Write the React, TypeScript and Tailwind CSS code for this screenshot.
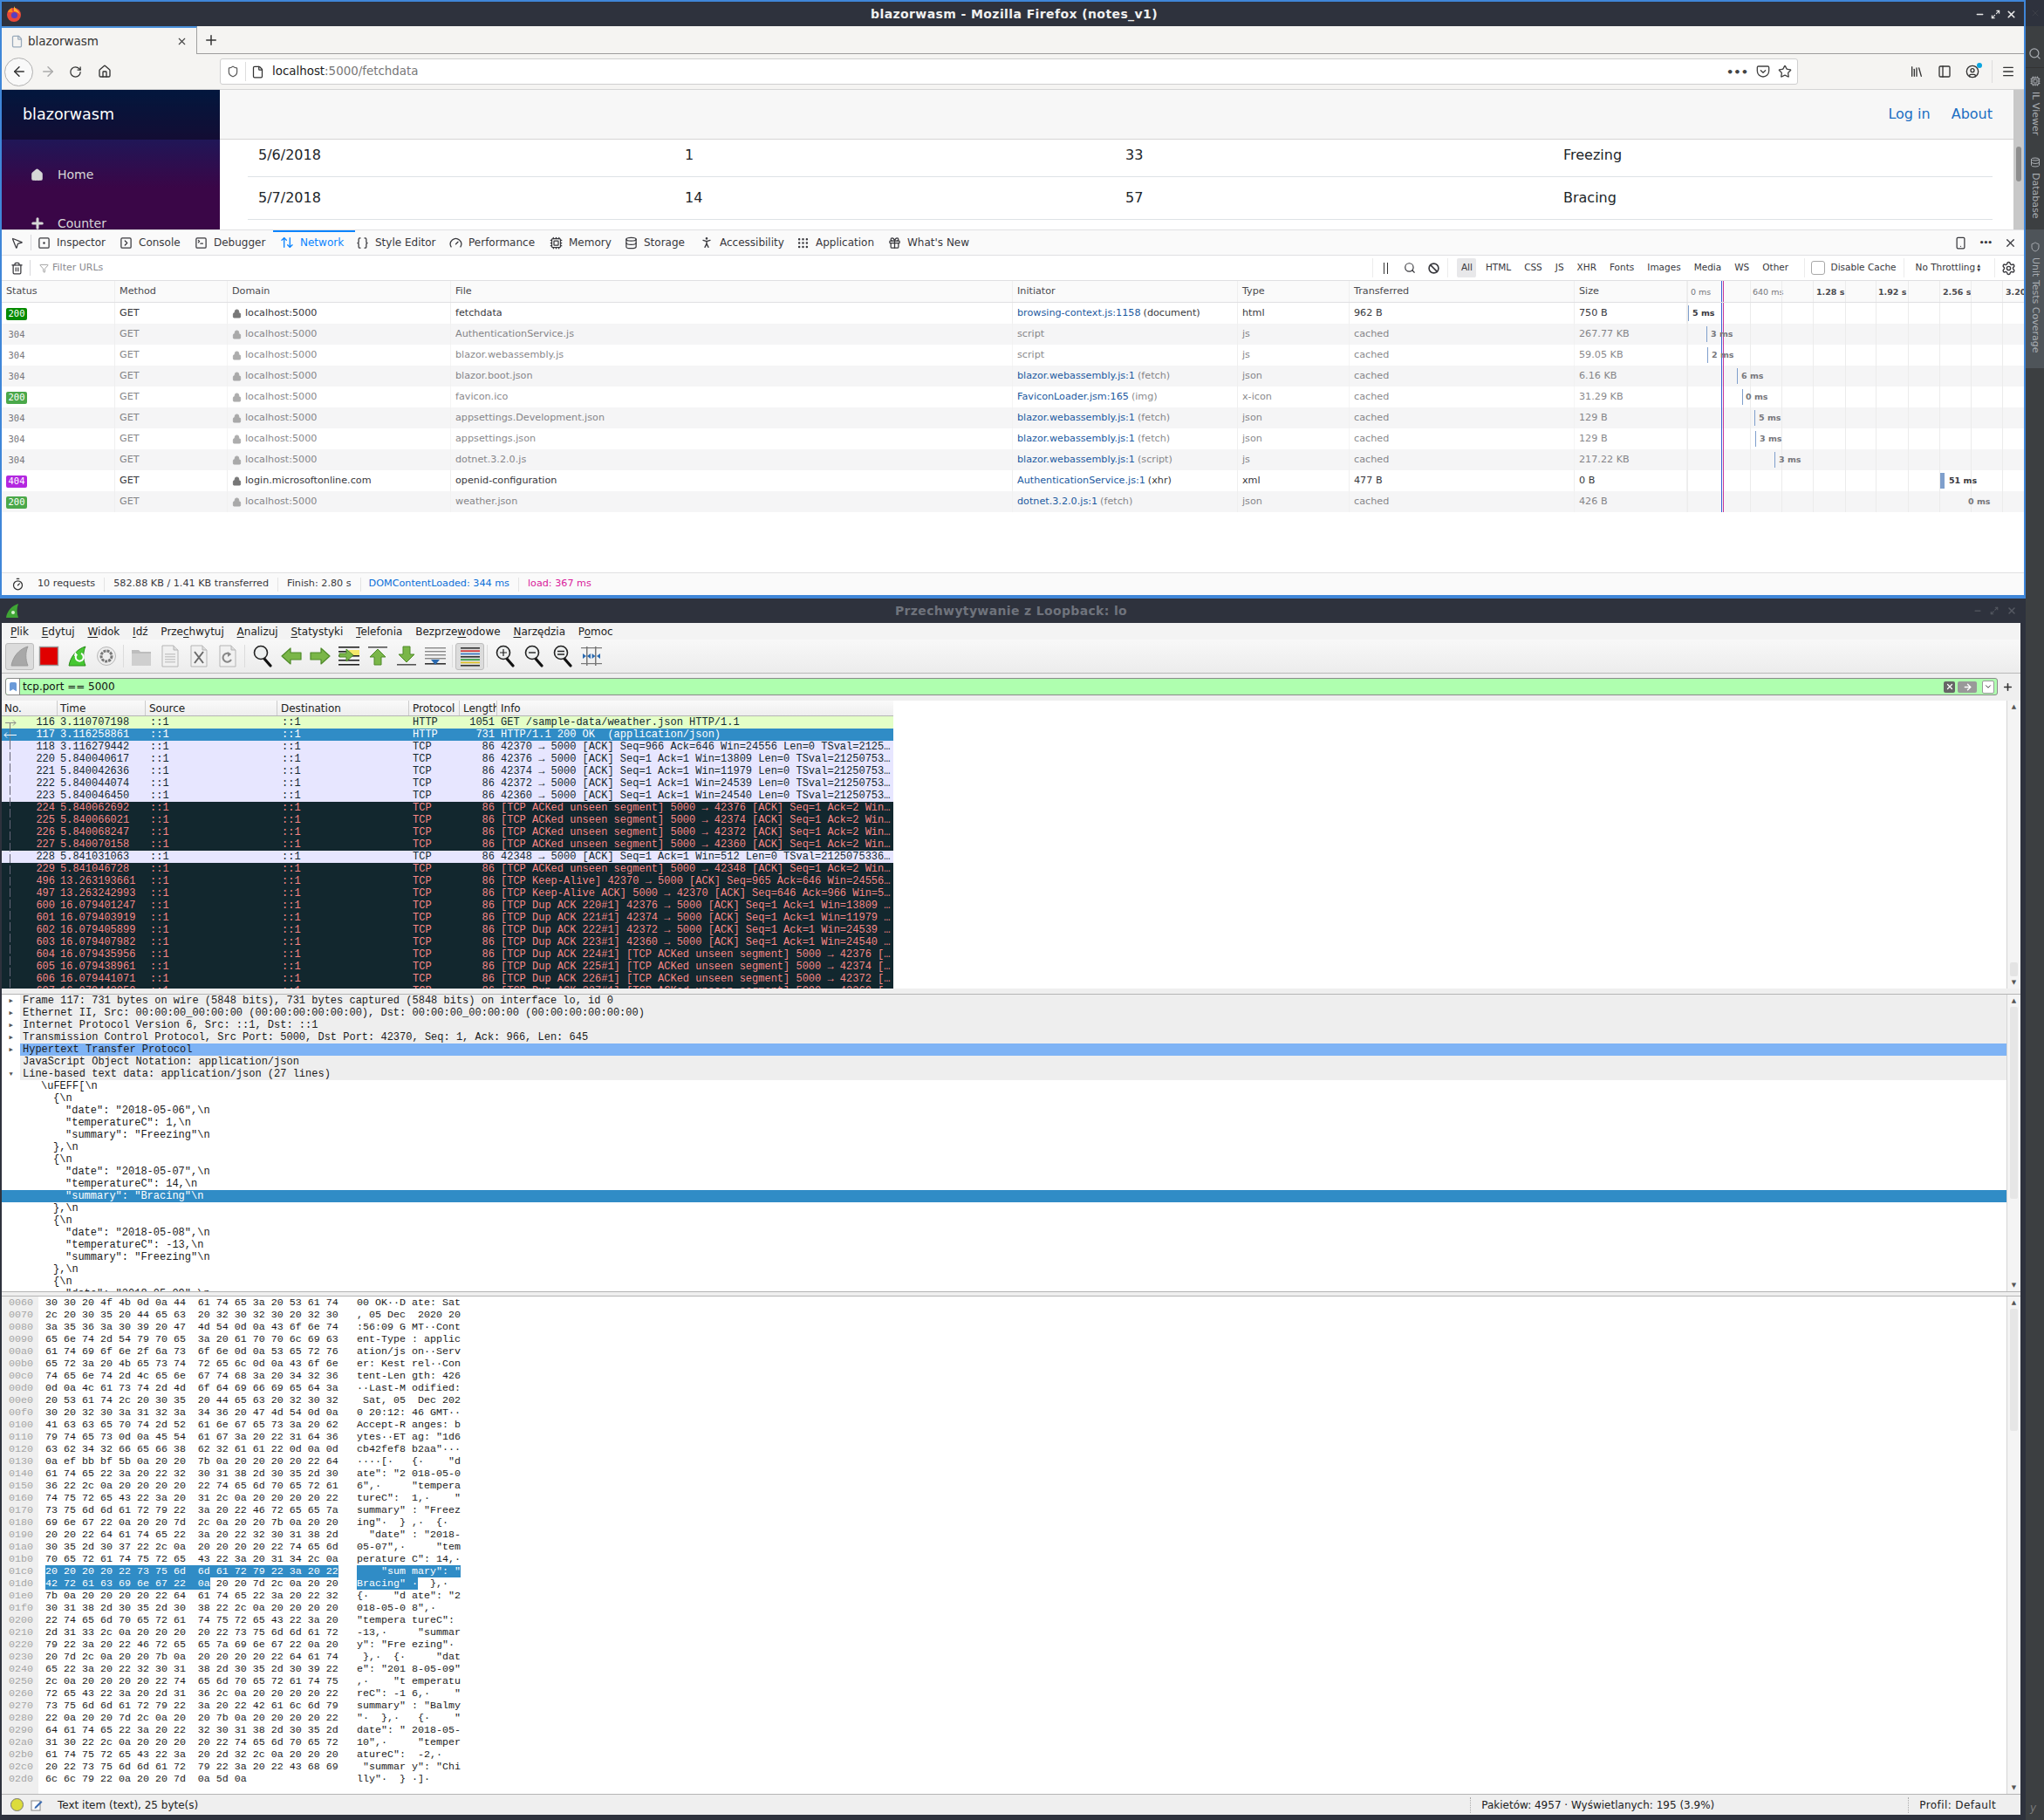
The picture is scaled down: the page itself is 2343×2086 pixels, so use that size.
import type { ReactNode } from "react";
import {
  ArrowLeft, ArrowRight, RotateCw, Home, File, Star, Library, PanelLeft, CircleUser, Menu, X, Plus,
  MousePointer2, SquareDot, SquareTerminal, ArrowUpDown, Braces, Gauge, Cpu, Database, PersonStanding,
  Grip, Gift, Trash2, Filter, Search, Ban, Settings, Timer, Lock, Smartphone, Shield, Pocket,
  Minus, Maximize2, SquareChevronRight, Bookmark, ChevronDown, ArrowRight as GoArrow,
} from "lucide-react";

const dj = "[font-family:'DejaVu_Sans',sans-serif]";

type Net = { st: string; dom?: string; file: string; init: string; via: string; type: string; tr: string; size: string; tick: number; label: number; ms: string; on?: boolean };

const NET: Net[] = [
  { st: "200", file: "fetchdata", init: "browsing-context.js:1158", via: "(document)", type: "html", tr: "962 B", size: "750 B", tick: 1, label: 6, ms: "5 ms", on: true },
  { st: "304", file: "AuthenticationService.js", init: "", via: "script", type: "js", tr: "cached", size: "267.77 KB", tick: 22, label: 27, ms: "3 ms" },
  { st: "304", file: "blazor.webassembly.js", init: "", via: "script", type: "js", tr: "cached", size: "59.05 KB", tick: 23, label: 28, ms: "2 ms" },
  { st: "304", file: "blazor.boot.json", init: "blazor.webassembly.js:1", via: "(fetch)", type: "json", tr: "cached", size: "6.16 KB", tick: 57, label: 62, ms: "6 ms" },
  { st: "200", file: "favicon.ico", init: "FaviconLoader.jsm:165", via: "(img)", type: "x-icon", tr: "cached", size: "31.29 KB", tick: 63, label: 67, ms: "0 ms" },
  { st: "304", file: "appsettings.Development.json", init: "blazor.webassembly.js:1", via: "(fetch)", type: "json", tr: "cached", size: "129 B", tick: 77, label: 82, ms: "5 ms" },
  { st: "304", file: "appsettings.json", init: "blazor.webassembly.js:1", via: "(fetch)", type: "json", tr: "cached", size: "129 B", tick: 78, label: 83, ms: "3 ms" },
  { st: "304", file: "dotnet.3.2.0.js", init: "blazor.webassembly.js:1", via: "(script)", type: "js", tr: "cached", size: "217.22 KB", tick: 100, label: 105, ms: "3 ms" },
  { st: "404", dom: "login.microsoftonline.com", file: "openid-configuration", init: "AuthenticationService.js:1", via: "(xhr)", type: "xml", tr: "477 B", size: "0 B", tick: 290, label: 300, ms: "51 ms", on: true },
  { st: "200", file: "weather.json", init: "dotnet.3.2.0.js:1", via: "(fetch)", type: "json", tr: "cached", size: "426 B", tick: -1, label: 322, ms: "0 ms" },
];

const GRID = [0, 72, 108, 144, 181, 216, 253, 289, 325, 361];
const TICKS = [
  { x: 4, t: "0 ms", b: false },
  { x: 75, t: "640 ms", b: false },
  { x: 148, t: "1.28 s", b: true },
  { x: 219, t: "1.92 s", b: true },
  { x: 293, t: "2.56 s", b: true },
  { x: 365, t: "3.20", b: true },
];

const DEV_TABS = [
  { t: "Inspector", w: "w-[94px]", i: <SquareDot size={15} /> },
  { t: "Console", w: "w-[86px]", i: <SquareChevronRight size={15} /> },
  { t: "Debugger", w: "w-[98px]", i: <SquareTerminal size={15} /> },
  { t: "Network", w: "w-[87px]", i: <ArrowUpDown size={16} />, on: true },
  { t: "Style Editor", w: "w-[107px]", i: <Braces size={15} /> },
  { t: "Performance", w: "w-[115px]", i: <Gauge size={15} /> },
  { t: "Memory", w: "w-[86px]", i: <Cpu size={15} /> },
  { t: "Storage", w: "w-[86px]", i: <Database size={15} /> },
  { t: "Accessibility", w: "w-[111px]", i: <PersonStanding size={16} /> },
  { t: "Application", w: "w-[105px]", i: <Grip size={15} /> },
  { t: "What's New", w: "w-[100px]", i: <Gift size={15} /> },
];

const CHIPS = ["All", "HTML", "CSS", "JS", "XHR", "Fonts", "Images", "Media", "WS", "Other"];

type Pk = [string, string, string, string, string, "http" | "sel" | "tcp" | "bad"];
const PACKETS: Pk[] = [
  ["116", "3.110707198", "HTTP", "1051", "GET /sample-data/weather.json HTTP/1.1", "http"],
  ["117", "3.116258861", "HTTP", "731", "HTTP/1.1 200 OK  (application/json)", "sel"],
  ["118", "3.116279442", "TCP", "86", "42370 → 5000 [ACK] Seq=966 Ack=646 Win=24556 Len=0 TSval=2125…", "tcp"],
  ["220", "5.840040617", "TCP", "86", "42376 → 5000 [ACK] Seq=1 Ack=1 Win=13809 Len=0 TSval=21250753…", "tcp"],
  ["221", "5.840042636", "TCP", "86", "42374 → 5000 [ACK] Seq=1 Ack=1 Win=11979 Len=0 TSval=21250753…", "tcp"],
  ["222", "5.840044074", "TCP", "86", "42372 → 5000 [ACK] Seq=1 Ack=1 Win=24539 Len=0 TSval=21250753…", "tcp"],
  ["223", "5.840046450", "TCP", "86", "42360 → 5000 [ACK] Seq=1 Ack=1 Win=24540 Len=0 TSval=21250753…", "tcp"],
  ["224", "5.840062692", "TCP", "86", "[TCP ACKed unseen segment] 5000 → 42376 [ACK] Seq=1 Ack=2 Win…", "bad"],
  ["225", "5.840066021", "TCP", "86", "[TCP ACKed unseen segment] 5000 → 42374 [ACK] Seq=1 Ack=2 Win…", "bad"],
  ["226", "5.840068247", "TCP", "86", "[TCP ACKed unseen segment] 5000 → 42372 [ACK] Seq=1 Ack=2 Win…", "bad"],
  ["227", "5.840070158", "TCP", "86", "[TCP ACKed unseen segment] 5000 → 42360 [ACK] Seq=1 Ack=2 Win…", "bad"],
  ["228", "5.841031063", "TCP", "86", "42348 → 5000 [ACK] Seq=1 Ack=1 Win=512 Len=0 TSval=2125075336…", "tcp"],
  ["229", "5.841046728", "TCP", "86", "[TCP ACKed unseen segment] 5000 → 42348 [ACK] Seq=1 Ack=2 Win…", "bad"],
  ["496", "13.263193661", "TCP", "86", "[TCP Keep-Alive] 42370 → 5000 [ACK] Seq=965 Ack=646 Win=24556…", "bad"],
  ["497", "13.263242993", "TCP", "86", "[TCP Keep-Alive ACK] 5000 → 42370 [ACK] Seq=646 Ack=966 Win=5…", "bad"],
  ["600", "16.079401247", "TCP", "86", "[TCP Dup ACK 220#1] 42376 → 5000 [ACK] Seq=1 Ack=1 Win=13809 …", "bad"],
  ["601", "16.079403919", "TCP", "86", "[TCP Dup ACK 221#1] 42374 → 5000 [ACK] Seq=1 Ack=1 Win=11979 …", "bad"],
  ["602", "16.079405899", "TCP", "86", "[TCP Dup ACK 222#1] 42372 → 5000 [ACK] Seq=1 Ack=1 Win=24539 …", "bad"],
  ["603", "16.079407982", "TCP", "86", "[TCP Dup ACK 223#1] 42360 → 5000 [ACK] Seq=1 Ack=1 Win=24540 …", "bad"],
  ["604", "16.079435956", "TCP", "86", "[TCP Dup ACK 224#1] [TCP ACKed unseen segment] 5000 → 42376 […", "bad"],
  ["605", "16.079438961", "TCP", "86", "[TCP Dup ACK 225#1] [TCP ACKed unseen segment] 5000 → 42374 […", "bad"],
  ["606", "16.079441071", "TCP", "86", "[TCP Dup ACK 226#1] [TCP ACKed unseen segment] 5000 → 42372 […", "bad"],
  ["607", "16.079443050", "TCP", "86", "[TCP Dup ACK 227#1] [TCP ACKed unseen segment] 5000 → 42360 […", "bad"],
];

const ROW_CLS = {
  http: "bg-[#e4ffc7] text-[#12272e]",
  sel: "bg-[#308cc6] text-white",
  tcp: "bg-[#e7e6ff] text-[#12272e]",
  bad: "bg-[#12272e] text-[#f78787]",
};

const JSON_LINES: [number, string][] = [
  [47, "\\uFEFF[\\n"],
  [61, "{\\n"],
  [75, '"date": "2018-05-06",\\n'],
  [75, '"temperatureC": 1,\\n'],
  [75, '"summary": "Freezing"\\n'],
  [61, "},\\n"],
  [61, "{\\n"],
  [75, '"date": "2018-05-07",\\n'],
  [75, '"temperatureC": 14,\\n'],
  [75, '"summary": "Bracing"\\n'],
  [61, "},\\n"],
  [61, "{\\n"],
  [75, '"date": "2018-05-08",\\n'],
  [75, '"temperatureC": -13,\\n'],
  [75, '"summary": "Freezing"\\n'],
  [61, "},\\n"],
  [61, "{\\n"],
  [75, '"date": "2018-05-09",\\n'],
];

const TREE = [
  { t: "Frame 117: 731 bytes on wire (5848 bits), 731 bytes captured (5848 bits) on interface lo, id 0", m: "r" },
  { t: "Ethernet II, Src: 00:00:00_00:00:00 (00:00:00:00:00:00), Dst: 00:00:00_00:00:00 (00:00:00:00:00:00)", m: "r" },
  { t: "Internet Protocol Version 6, Src: ::1, Dst: ::1", m: "r" },
  { t: "Transmission Control Protocol, Src Port: 5000, Dst Port: 42370, Seq: 1, Ack: 966, Len: 645", m: "r" },
  { t: "Hypertext Transfer Protocol", m: "r", hi: true },
  { t: "JavaScript Object Notation: application/json", m: "" },
  { t: "Line-based text data: application/json (27 lines)", m: "d" },
];

const HEX: [string, string][] = [
  ["0060", "30 30 20 4f 4b 0d 0a 44 61 74 65 3a 20 53 61 74"],
  ["0070", "2c 20 30 35 20 44 65 63 20 32 30 32 30 20 32 30"],
  ["0080", "3a 35 36 3a 30 39 20 47 4d 54 0d 0a 43 6f 6e 74"],
  ["0090", "65 6e 74 2d 54 79 70 65 3a 20 61 70 70 6c 69 63"],
  ["00a0", "61 74 69 6f 6e 2f 6a 73 6f 6e 0d 0a 53 65 72 76"],
  ["00b0", "65 72 3a 20 4b 65 73 74 72 65 6c 0d 0a 43 6f 6e"],
  ["00c0", "74 65 6e 74 2d 4c 65 6e 67 74 68 3a 20 34 32 36"],
  ["00d0", "0d 0a 4c 61 73 74 2d 4d 6f 64 69 66 69 65 64 3a"],
  ["00e0", "20 53 61 74 2c 20 30 35 20 44 65 63 20 32 30 32"],
  ["00f0", "30 20 32 30 3a 31 32 3a 34 36 20 47 4d 54 0d 0a"],
  ["0100", "41 63 63 65 70 74 2d 52 61 6e 67 65 73 3a 20 62"],
  ["0110", "79 74 65 73 0d 0a 45 54 61 67 3a 20 22 31 64 36"],
  ["0120", "63 62 34 32 66 65 66 38 62 32 61 61 22 0d 0a 0d"],
  ["0130", "0a ef bb bf 5b 0a 20 20 7b 0a 20 20 20 20 22 64"],
  ["0140", "61 74 65 22 3a 20 22 32 30 31 38 2d 30 35 2d 30"],
  ["0150", "36 22 2c 0a 20 20 20 20 22 74 65 6d 70 65 72 61"],
  ["0160", "74 75 72 65 43 22 3a 20 31 2c 0a 20 20 20 20 22"],
  ["0170", "73 75 6d 6d 61 72 79 22 3a 20 22 46 72 65 65 7a"],
  ["0180", "69 6e 67 22 0a 20 20 7d 2c 0a 20 20 7b 0a 20 20"],
  ["0190", "20 20 22 64 61 74 65 22 3a 20 22 32 30 31 38 2d"],
  ["01a0", "30 35 2d 30 37 22 2c 0a 20 20 20 20 22 74 65 6d"],
  ["01b0", "70 65 72 61 74 75 72 65 43 22 3a 20 31 34 2c 0a"],
  ["01c0", "20 20 20 20 22 73 75 6d 6d 61 72 79 22 3a 20 22"],
  ["01d0", "42 72 61 63 69 6e 67 22 0a 20 20 7d 2c 0a 20 20"],
  ["01e0", "7b 0a 20 20 20 20 22 64 61 74 65 22 3a 20 22 32"],
  ["01f0", "30 31 38 2d 30 35 2d 30 38 22 2c 0a 20 20 20 20"],
  ["0200", "22 74 65 6d 70 65 72 61 74 75 72 65 43 22 3a 20"],
  ["0210", "2d 31 33 2c 0a 20 20 20 20 22 73 75 6d 6d 61 72"],
  ["0220", "79 22 3a 20 22 46 72 65 65 7a 69 6e 67 22 0a 20"],
  ["0230", "20 7d 2c 0a 20 20 7b 0a 20 20 20 20 22 64 61 74"],
  ["0240", "65 22 3a 20 22 32 30 31 38 2d 30 35 2d 30 39 22"],
  ["0250", "2c 0a 20 20 20 20 22 74 65 6d 70 65 72 61 74 75"],
  ["0260", "72 65 43 22 3a 20 2d 31 36 2c 0a 20 20 20 20 22"],
  ["0270", "73 75 6d 6d 61 72 79 22 3a 20 22 42 61 6c 6d 79"],
  ["0280", "22 0a 20 20 7d 2c 0a 20 20 7b 0a 20 20 20 20 22"],
  ["0290", "64 61 74 65 22 3a 20 22 32 30 31 38 2d 30 35 2d"],
  ["02a0", "31 30 22 2c 0a 20 20 20 20 22 74 65 6d 70 65 72"],
  ["02b0", "61 74 75 72 65 43 22 3a 20 2d 32 2c 0a 20 20 20"],
  ["02c0", "20 22 73 75 6d 6d 61 72 79 22 3a 20 22 43 68 69"],
  ["02d0", "6c 6c 79 22 0a 20 20 7d 0a 5d 0a"],
];

const MENU: [string, string, string][] = [
  ["", "P", "lik"], ["", "E", "dytuj"], ["", "W", "idok"], ["", "I", "dź"], ["Prze", "c", "hwytuj"], ["", "A", "nalizuj"],
  ["", "S", "tatystyki"], ["", "T", "elefonia"], ["Bezprze", "w", "odowe"], ["", "N", "arzędzia"], ["P", "o", "moc"],
];

function ascii(bytes: string[]) {
  return bytes.map((b) => {
    const c = parseInt(b, 16);
    return c >= 32 && c < 127 ? String.fromCharCode(c) : "·";
  }).join("");
}

function HexLine({ off, hex }: { off: string; hex: string }) {
  const b = hex.split(" ");
  const h = b.slice(0, 8).join(" ") + "  " + b.slice(8).join(" ");
  const a = ascii(b.slice(0, 8)) + " " + ascii(b.slice(8));
  let hexEl: ReactNode = h;
  let ascEl: ReactNode = a;
  const sel = "bg-[#308cc6] text-white";
  if (off === "01c0") {
    hexEl = <span className={sel}>{h}</span>;
    ascEl = <span className={sel}>{a}</span>;
  }
  if (off === "01d0") {
    hexEl = <><span className={sel}>{h.slice(0, 27)}</span>{h.slice(27)}</>;
    ascEl = <><span className={sel}>{a.slice(0, 10)}</span>{a.slice(10)}</>;
  }
  return (
    <div className="flex h-[14px] whitespace-pre text-[#1a1a1a]">
      <span className="w-[336px]">{hexEl}</span>
      <span className="ml-[21px]">{ascEl}</span>
    </div>
  );
}

function FirefoxLogo() {
  return (
    <svg width="18" height="20" viewBox="0 0 18 20">
      <circle cx="9" cy="11" r="8" fill="#e8493a" />
      <path d="M9 1c1 3 6 5 7 10-2-3-5-4-7-4z" fill="#ffb02e" />
      <path d="M2 8c1-3 3-4 5-5-1 3 0 4 1 5z" fill="#ff8a1e" />
      <circle cx="9.5" cy="11.5" r="3.6" fill="#5a3fc0" />
    </svg>
  );
}

function Fin({ fill, stroke }: { fill: string; stroke: string }) {
  return (
    <svg width="24" height="24" viewBox="0 0 24 24">
      <path d="M2 23C4 12 11 4 21 1c-3 6-3 15 0 22z" fill={fill} stroke={stroke} strokeWidth="1" />
    </svg>
  );
}

function Doc({ children }: { children?: ReactNode }) {
  return (
    <svg width="24" height="26" viewBox="0 0 24 26">
      <path d="M3 1h13l5 5v19H3z" fill="#f1f1f1" stroke="#b5b5b5" />
      <path d="M16 1v5h5" fill="#ddd" stroke="#b5b5b5" />
      {children}
    </svg>
  );
}

function Lens({ inner }: { inner?: ReactNode }) {
  return (
    <svg width="22" height="26" viewBox="0 0 22 26">
      <path d="M13 16l7 8" stroke="#111" strokeWidth="3.2" strokeLinecap="round" />
      <circle cx="9" cy="9" r="7.5" fill="#eef0f0" stroke="#222" strokeWidth="1.6" />
      {inner}
    </svg>
  );
}

function GreenArrow({ d }: { d: string }) {
  return (
    <svg width="24" height="24" viewBox="0 0 24 24">
      <path d={d} fill="#7ab648" stroke="#4e8a28" strokeWidth="1.2" strokeLinejoin="round" />
    </svg>
  );
}

function TextLines({ colors }: { colors?: string[] }) {
  const c = colors ?? ["#333", "#333", "#333", "#333"];
  return (
    <svg width="22" height="24" viewBox="0 0 22 24">
      {c.map((s, i) => <rect key={i} x="0" y={2 + i * (20 / (c.length - 1))} width="22" height="1.6" fill={s} />)}
    </svg>
  );
}

const TOOLS: { w: string; el: ReactNode; on?: boolean; sep?: boolean }[] = [
  { w: "w-[33px]", on: true, el: <Fin fill="#a8a8a8" stroke="#9a9a9a" /> },
  { w: "w-[33px]", el: <svg width="24" height="24" viewBox="0 0 24 24"><rect x="1.5" y="1.5" width="21" height="21" fill="#e00000" stroke="#999" strokeWidth="1.4" /></svg> },
  { w: "w-[33px]", el: <svg width="24" height="24" viewBox="0 0 24 24"><path d="M2 23C4 12 11 4 21 1c-3 6-3 15 0 22z" fill="#46c832" stroke="#2c8a1c" /><path d="M16 9a4.5 4.5 0 1 1-5 1" fill="none" stroke="#fff" strokeWidth="2" /><path d="M9 7l3 4-4 1z" fill="#fff" /></svg> },
  { w: "w-[33px]", el: <svg width="24" height="24" viewBox="0 0 24 24"><circle cx="12" cy="12" r="10.5" fill="#eee" stroke="#b8b8b8" /><circle cx="12" cy="12" r="6" fill="none" stroke="#777" strokeWidth="3" strokeDasharray="3 1" /><circle cx="12" cy="12" r="2.4" fill="#eee" /></svg>, sep: true },
  { w: "w-[33px]", el: <svg width="24" height="24" viewBox="0 0 24 24"><path d="M1 5h8l2 2h12v16H1z" fill="#bdbdbd" /><path d="M1 9h22v14H1z" fill="#cfcfcf" /></svg> },
  { w: "w-[33px]", el: <Doc><g fill="#c9c9c9"><rect x="6" y="10" width="12" height="1.5" /><rect x="6" y="13" width="12" height="1.5" /><rect x="6" y="16" width="12" height="1.5" /><rect x="6" y="19" width="12" height="1.5" /></g></Doc> },
  { w: "w-[33px]", el: <Doc><path d="M7 8l10 13M17 8L7 21" stroke="#6a6a6a" strokeWidth="2" /></Doc> },
  { w: "w-[33px]", el: <Doc><path d="M15 11a5 5 0 1 0 1 6" fill="none" stroke="#888" strokeWidth="2" /><path d="M12 8l4 3-4 3z" fill="#888" /></Doc>, sep: true },
  { w: "w-[33px]", el: <Lens /> },
  { w: "w-[33px]", el: <GreenArrow d="M1 12l10-9v5h12v8H11v5z" /> },
  { w: "w-[33px]", el: <GreenArrow d="M23 12l-10-9v5H1v8h12v5z" /> },
  { w: "w-[33px]", el: <svg width="24" height="24" viewBox="0 0 24 24"><g fill="#222"><rect y="1" width="24" height="1.6" /><rect y="6" width="24" height="1.6" /><rect y="11" width="24" height="1.6" /><rect y="16" width="24" height="1.6" /><rect y="21" width="24" height="1.6" /></g><rect x="12" y="5" width="12" height="6" fill="#f4e86a" /><path d="M1 9h8V4l8 7-8 7v-5H1z" fill="#7ab648" stroke="#4e8a28" /></svg> },
  { w: "w-[33px]", el: <svg width="24" height="24" viewBox="0 0 24 24"><rect x="1" y="1" width="22" height="1.6" fill="#555" /><path d="M12 4l9 9h-5v9H8v-9H3z" fill="#7ab648" stroke="#4e8a28" /></svg> },
  { w: "w-[33px]", el: <svg width="24" height="24" viewBox="0 0 24 24"><rect x="1" y="21" width="22" height="1.6" fill="#555" /><path d="M12 19l9-9h-5V1H8v9H3z" fill="#7ab648" stroke="#4e8a28" /></svg> },
  { w: "w-[33px]", el: <svg width="24" height="24" viewBox="0 0 24 24"><g fill="#888"><rect y="2" width="24" height="1.4" /><rect y="6" width="24" height="1.4" /><rect y="10" width="24" height="1.4" /><rect y="14" width="24" height="1.4" /></g><rect y="20" width="24" height="1.6" fill="#333" /><path d="M7 16h10l-5 6z" fill="#2a6ab0" /></svg>, sep: true },
  { w: "w-[33px]", on: true, el: <TextLines colors={["#333", "#d03030", "#3a7ac8", "#333", "#2a9a3a", "#e0c020", "#333"]} />, sep: true },
  { w: "w-[33px]", el: <Lens inner={<path d="M5 9h8M9 5v8" stroke="#222" strokeWidth="1.2" />} /> },
  { w: "w-[33px]", el: <Lens inner={<path d="M5 9h8" stroke="#222" strokeWidth="1.4" />} /> },
  { w: "w-[33px]", el: <Lens inner={<path d="M5 7.5h8M5 11h8" stroke="#222" strokeWidth="1.3" />} /> },
  { w: "w-[33px]", el: <svg width="24" height="24" viewBox="0 0 24 24"><g fill="#777"><rect x="6" y="1" width="1.5" height="22" /><rect x="16" y="1" width="1.5" height="22" /><rect y="2" width="24" height="1.2" /><rect y="20" width="24" height="1.2" /></g><path d="M2 9l4 3-4 3zM11 9l-4 3 4 3zM12.5 9l4 3-4 3zM22 9l-4 3 4 3z" fill="#2a6ab0" /></svg> },
];

function Scroll({ thumb }: { thumb: string }) {
  return (
    <div className="flex w-[16px] shrink-0 flex-col items-center border-l border-[#d4d4d4] bg-[#f4f4f4] text-[#555]">
      <span className="flex h-[14px] items-center text-[7px] leading-none">▲</span>
      <div className="flex min-h-0 w-full flex-1 flex-col px-[3px]">
        <div className={thumb} />
      </div>
      <span className="flex h-[14px] items-center text-[7px] leading-none">▼</span>
    </div>
  );
}

function Firefox() {
  return (
    <div className={`flex h-[686px] flex-col overflow-hidden border-x-2 border-t-2 border-b-4 border-[#3f86d8] bg-white ${dj}`}>
      <div className="flex h-[28px] shrink-0 items-center bg-[#2e323d] pl-[5px] text-white">
        <FirefoxLogo />
        <div className="flex-1 pb-px pl-[36px] text-center text-[14px] font-bold leading-none tracking-[0.4px] text-[#f0f0f0]">blazorwasm - Mozilla Firefox (notes_v1)</div>
        <div className="flex w-[56px] items-center justify-between pr-[8px] text-[#e8e8e8]">
          <Minus size={11} strokeWidth={3} />
          <Maximize2 size={11} strokeWidth={2.5} />
          <X size={13} strokeWidth={3} />
        </div>
      </div>
      <div className="flex h-[32px] shrink-0 border-b border-[#9d9d9d] bg-[#f5f4f2]">
        <div className="-mb-px flex w-[224px] items-center border-r border-t-2 border-[#a0a0a0] border-t-[#4a90d9] bg-[#f5f4f2] pl-[10px] text-[13.5px] text-[#333]">
          <File size={15} className="text-[#9ab]" />
          <span className="ml-[5px] flex-1">blazorwasm</span>
          <X size={13} className="mr-[10px] text-[#444]" />
        </div>
        <div className="flex w-[32px] items-center justify-center text-[#333]"><Plus size={18} /></div>
      </div>
      <div className="flex h-[41px] shrink-0 items-center border-b border-[#d4d4d4] bg-[#f5f4f2]">
        <div className="ml-[3px] flex h-[33px] w-[33px] items-center justify-center rounded-full border border-[#b0b0b0] bg-[#f9f9f9] text-[#333]"><ArrowLeft size={18} /></div>
        <ArrowRight size={18} className="ml-[8px] text-[#aaa]" />
        <RotateCw size={15} className="ml-[15px] text-[#333]" />
        <Home size={16} className="ml-[18px] text-[#333]" />
        <div className="ml-[124px] flex h-[30px] w-[1809px] items-center rounded-[3px] border border-[#cfcfcf] bg-white text-[13.4px]">
          <Shield size={14} className="ml-[7px] text-[#555]" />
          <span className="ml-[7px] h-[22px] w-px bg-[#ddd]" />
          <File size={15} className="ml-[6px] text-[#333]" />
          <span className="ml-[9px] flex-1 text-[#222]">localhost<span className="text-[#777]">:5000/fetchdata</span></span>
          <span className="mr-[9px] text-[13px] font-bold leading-none text-[#444]">•••</span>
          <Pocket size={16} className="mr-[9px] text-[#444]" />
          <Star size={16} className="mr-[6px] text-[#444]" />
        </div>
        <div className="ml-auto flex items-center pr-[10px] text-[#333]">
          <Library size={16} />
          <PanelLeft size={16} className="ml-[16px]" />
          <div className="relative ml-[16px]">
            <CircleUser size={16} />
            <span className="absolute -right-[3px] -top-[2px] h-[6px] w-[6px] rounded-full bg-[#0aa5e0]" />
          </div>
          <span className="ml-[14px] h-[26px] w-px bg-[#ddd]" />
          <Menu size={16} className="ml-[10px]" />
        </div>
      </div>
      <div className="flex h-[160px] shrink-0 overflow-hidden">
        <div className="w-[250px] shrink-0 bg-[linear-gradient(180deg,#052767_0%,#3a0647_70%)] text-[#d7d7d7]">
          <div className="flex h-[57px] items-center bg-black/40 pl-[24px] text-[17.5px] text-white">blazorwasm</div>
          <div className="mt-[21px] flex h-[38px] items-center pl-[33px] text-[14px]">
            <Home size={15} fill="#d7d7d7" />
            <span className="ml-[16px]">Home</span>
          </div>
          <div className="mt-[18px] flex h-[38px] items-center pl-[32px] text-[14px]">
            <Plus size={18} strokeWidth={4} />
            <span className="ml-[14px]">Counter</span>
          </div>
        </div>
        <div className="flex min-w-0 flex-1 flex-col text-[16px] text-[#212529]">
          <div className="relative z-10 flex h-[57px] shrink-0 items-center justify-end gap-[24px] border-b border-[#d6d5d5] bg-[#f7f7f7] pr-[24px] text-[16px] text-[#1b6ec2]">
            <span>Log in</span>
            <span>About</span>
          </div>
          <div className="-mt-[6px] pl-[32px] pr-[24px]">
            {[["5/6/2018", "1", "33", "Freezing"], ["5/7/2018", "14", "57", "Bracing"]].map((r) => (
              <div key={r[0]} className="flex h-[49px] items-center border-b border-[#dee2e6] pl-[12px]">
                <span className="w-[489px]">{r[0]}</span>
                <span className="w-[505px]">{r[1]}</span>
                <span className="w-[502px]">{r[2]}</span>
                <span>{r[3]}</span>
              </div>
            ))}
          </div>
        </div>
        <div className="w-[12px] shrink-0 bg-[#c8c8c8] px-[3px] pt-[65px]">
          <div className="h-[40px] rounded-[3px] bg-[#8e8e8e]" />
        </div>
      </div>
      <DevTools />
    </div>
  );
}

function DevTools() {
  return (
    <div className="flex min-h-0 flex-1 flex-col text-[11.2px] text-[#38383d]">
      <div className="flex h-[30px] shrink-0 items-center border-y border-[#e0e0e2] bg-[#fafafa] text-[12px]">
        <MousePointer2 size={15} className="ml-[10px]" />
        <span className="ml-[8px] mr-[7px] h-[18px] w-px bg-[#d7d7db]" />
        {DEV_TABS.map((t) => (
          <div key={t.t} className={`relative flex h-full shrink-0 items-center gap-[7px] ${t.w} ${t.on ? "text-[#0a84ff]" : ""}`}>
            {t.i}
            <span className="whitespace-nowrap">{t.t}</span>
            {t.on && <span className="absolute -left-[8px] right-[1px] top-0 h-[2px] bg-[#0a84ff]" />}
          </div>
        ))}
        <div className="ml-auto flex items-center gap-[14px] pr-[8px]">
          <Smartphone size={15} />
          <span className="text-[9px] font-bold leading-none tracking-[-1px]">•••</span>
          <X size={15} />
        </div>
      </div>
      <div className="flex h-[29px] shrink-0 items-center border-b border-[#e0e0e2] bg-white">
        <Trash2 size={15} className="ml-[10px]" />
        <span className="ml-[7px] h-[18px] w-px bg-[#d7d7db]" />
        <Filter size={11} className="ml-[10px] text-[#999]" />
        <span className="ml-[4px] text-[11px] text-[#8a8a8f]">Filter URLs</span>
        <div className="ml-auto flex items-center pr-[9px] text-[10.5px]">
          <span className="h-[22px] w-px bg-[#ececec]" />
          <span className="ml-[12px] flex gap-[3px]"><span className="h-[13px] w-px bg-[#333]" /><span className="h-[13px] w-px bg-[#333]" /></span>
          <Search size={14} className="ml-[18px]" />
          <Ban size={13} strokeWidth={3} className="ml-[14px]" />
          <span className="ml-[9px] h-[22px] w-px bg-[#ececec]" />
          <div className="ml-[10px] flex items-center gap-[6px]">
            {CHIPS.map((c) => (
              <span key={c} className={`flex h-[22px] items-center rounded-[2px] px-[4.5px] ${c === "All" ? "bg-[#e8e8ea]" : ""}`}>{c}</span>
            ))}
          </div>
          <span className="ml-[13px] h-[22px] w-px bg-[#ececec]" />
          <span className="ml-[7px] h-[16px] w-[16px] rounded-[3px] border border-[#a8a8a8] bg-white" />
          <span className="ml-[7px]">Disable Cache</span>
          <span className="ml-[8px] h-[22px] w-px bg-[#ececec]" />
          <span className="ml-[13px]">No Throttling</span>
          <span className="ml-[2px] flex flex-col text-[5px] leading-[5px]"><span>▲</span><span>▼</span></span>
          <span className="ml-[16px] h-[22px] w-px bg-[#ececec]" />
          <Settings size={17} className="ml-[7px]" />
        </div>
      </div>
      <div className="flex h-[25px] shrink-0 items-center border-b border-[#e0e0e2] bg-[#fafafa] text-[#4a4a4f]">
        <Cell w="w-[130px]">Status</Cell>
        <Cell w="w-[129px]">Method</Cell>
        <Cell w="w-[256px]">Domain</Cell>
        <Cell w="w-[644px]">File</Cell>
        <Cell w="w-[258px]">Initiator</Cell>
        <Cell w="w-[128px]">Type</Cell>
        <Cell w="w-[258px]">Transferred</Cell>
        <Cell w="w-[129px]">Size</Cell>
        <div className="relative h-full flex-1 overflow-hidden text-[9.5px]">
          {TICKS.map((t) => (
            <span key={t.t} className={`absolute top-[6px] whitespace-nowrap ${t.b ? "font-bold" : "text-[#77777c]"}`} style={{ left: t.x }}>{t.t}</span>
          ))}
          {GRID.map((x) => <span key={x} className="absolute top-0 h-full w-px bg-[#ececec]" style={{ left: x }} />)}
          <span className="absolute top-0 h-full w-px bg-[#3a62d8]" style={{ left: 39 }} />
          <span className="absolute top-0 h-full w-px bg-[#c83a9a]" style={{ left: 41 }} />
        </div>
      </div>
      <div className="min-h-0 flex-1 bg-white">
        {NET.map((r, i) => {
          const dim = r.on ? "" : "opacity-60";
          const badge = r.st === "404" ? "bg-[#b327e0] text-white" : r.st === "200" && r.on ? "bg-[#058b00] text-white" : r.st === "200" ? "bg-[#4aa84a] text-white" : "text-[#77777c]";
          return (
            <div key={i} className={`flex h-[24px] items-center ${i % 2 ? "bg-[#f5f5f6]" : "bg-white"}`}>
              <div className="h-full w-[130px] shrink-0 border-r border-[#efefef] pl-[5px] pt-[5.5px]">
                <span className={`flex h-[14px] w-[24px] items-center justify-center rounded-[2px] [font-family:'DejaVu_Sans_Mono',monospace] text-[10.5px] ${badge}`}>{r.st}</span>
              </div>
              <Cell w="w-[129px]" cls={dim}>GET</Cell>
              <Cell w="w-[256px]" cls={dim}><Lock size={11} fill="#777" className="mr-[4px] text-[#777]" />{r.dom ?? "localhost:5000"}</Cell>
              <Cell w="w-[644px]" cls={dim}>{r.file}</Cell>
              <Cell w="w-[258px]">
                {r.init && <span className="mr-[3px] text-[#1c5aa0]">{r.init}</span>}
                <span className={dim}>{r.via}</span>
              </Cell>
              <Cell w="w-[128px]" cls={dim}>{r.type}</Cell>
              <Cell w="w-[258px]" cls={dim}>{r.tr}</Cell>
              <Cell w="w-[129px]" cls={dim}>{r.size}</Cell>
              <div className="relative h-full flex-1 overflow-hidden text-[9.5px]">
                {GRID.map((x) => <span key={x} className="absolute top-0 h-full w-px bg-[#ececec]" style={{ left: x }} />)}
                <span className="absolute top-0 h-full w-px bg-[#3a62d8]" style={{ left: 39 }} />
                <span className="absolute top-0 h-full w-px bg-[#c83a9a]" style={{ left: 41 }} />
                {r.tick >= 0 && (r.ms === "51 ms"
                  ? <span className="absolute top-[3px] h-[18px] w-[5px] bg-[#7f9fcc]" style={{ left: r.tick }} />
                  : <span className="absolute top-[3px] h-[18px] w-px bg-[#7f9fcc]" style={{ left: r.tick }} />)}
                <span className={`absolute top-[5px] whitespace-nowrap font-bold ${r.on ? "" : "text-[#77777c]"}`} style={{ left: r.label }}>{r.ms}</span>
              </div>
            </div>
          );
        })}
      </div>
      <div className="flex h-[26px] shrink-0 items-center border-t border-[#e0e0e2] bg-[#fafafa]">
        <Timer size={15} className="ml-[11px] text-[#333]" />
        <span className="ml-[15px]">10 requests</span>
        <span className="ml-[10px] h-[16px] w-px bg-[#e4e4e4]" />
        <span className="ml-[10px]">582.88 KB / 1.41 KB transferred</span>
        <span className="ml-[10px] h-[16px] w-px bg-[#e4e4e4]" />
        <span className="ml-[10px]">Finish: 2.80 s</span>
        <span className="ml-[10px] h-[16px] w-px bg-[#e4e4e4]" />
        <span className="ml-[9px] text-[#0a6fd8]">DOMContentLoaded: 344 ms</span>
        <span className="ml-[10px] h-[16px] w-px bg-[#e4e4e4]" />
        <span className="ml-[10px] text-[#d91a9a]">load: 367 ms</span>
      </div>
    </div>
  );
}

function Cell({ w, cls = "", children }: { w: string; cls?: string; children: ReactNode }) {
  return <div className={`flex h-full shrink-0 items-center overflow-hidden whitespace-nowrap border-r border-[#efefef] pl-[5px] ${w} ${cls}`}>{children}</div>;
}

function PacketList() {
  return (
    <div className="flex h-[330px] shrink-0 overflow-hidden bg-white">
      <div className="relative min-w-0 flex-1">
        <div className={`flex h-[18px] w-[1022px] border-b border-[#b5b5b5] bg-[linear-gradient(#fafafa,#eeeeee)] text-[12px] leading-[19px] text-[#222] ${dj}`}>
          <span className="w-[64px] border-r border-[#ccc] pl-[3px]">No.</span>
          <span className="w-[101px] border-r border-[#ccc] pl-[3px]">Time</span>
          <span className="w-[151px] border-r border-[#ccc] pl-[4px]">Source</span>
          <span className="w-[151px] border-r border-[#ccc] pl-[4px]">Destination</span>
          <span className="w-[58px] overflow-hidden border-r border-[#ccc] pl-[4px]">Protocol</span>
          <span className="w-[43px] overflow-hidden border-r border-[#ccc] pl-[4px]">Length</span>
          <span className="pl-[4px]">Info</span>
        </div>
        {PACKETS.map((p) => (
          <div key={p[0]} className={`flex h-[14px] w-[1022px] whitespace-pre text-[12px] leading-[14px] [font-family:'Liberation_Mono',monospace] ${ROW_CLS[p[5]]}`}>
            <span className="w-[64px] pr-[3px] text-right">{p[0]}</span>
            <span className="w-[101px] pl-[3px]">{p[1]}</span>
            <span className="w-[151px] pl-[5px]">::1</span>
            <span className="w-[151px] pl-[5px]">::1</span>
            <span className="w-[58px] pl-[4px]">{p[2]}</span>
            <span className="w-[43px] pr-[3px] text-right">{p[3]}</span>
            <span className="w-[454px] overflow-hidden pl-[4px]">{p[4]}</span>
          </div>
        ))}
        <svg className="absolute left-0 top-[18px]" width="20" height="312" viewBox="0 0 20 312">
          <path d="M9.5 7v22" stroke="#777" fill="none" />
          <path d="M4 7.5h12M13 4.5l3 3-3 3" stroke="#8a8a8a" fill="none" />
          <path d="M3 21.5h14M6 18.5l-3 3 3 3" stroke="#fff" fill="none" />
          <path d="M9.5 28v284" stroke="#667" strokeDasharray="10 3" fill="none" />
        </svg>
      </div>
      <Scroll thumb="mt-auto h-[16px] rounded-[2px] bg-[#e4e4e4]" />
    </div>
  );
}

function Details() {
  return (
    <div className="flex h-[342px] shrink-0 overflow-hidden border-y border-[#b5b5b5] bg-white">
      <div className="min-w-0 flex-1 overflow-hidden whitespace-pre text-[12px] leading-[14px] [font-family:'Liberation_Mono',monospace] text-[#1a1a1a]">
        {TREE.map((r) => (
          <div key={r.t} className="flex h-[14px]">
            <span className="flex w-[21px] shrink-0 items-center justify-center text-[7px] leading-none text-[#555]">{r.m === "r" ? "▶" : r.m === "d" ? "▼" : ""}</span>
            <span className={`flex-1 pl-[3px] ${r.hi ? "bg-[#7eb3f5]" : "bg-[#eeeeee]"}`}>{r.t}</span>
          </div>
        ))}
        {JSON_LINES.map(([x, t], i) => (
          <div key={i} className={`h-[14px] ${i === 9 ? "bg-[#308cc6] text-white" : ""}`} style={{ paddingLeft: x - 2 }}>{t}</div>
        ))}
      </div>
      <Scroll thumb="h-[220px] rounded-[2px] bg-[#e6e6e6]" />
    </div>
  );
}

function HexPane() {
  return (
    <div className="flex min-h-0 flex-1 overflow-hidden border-y border-[#b5b5b5] bg-white">
      <div className="flex min-w-0 flex-1 overflow-hidden text-[11.67px] leading-[14px] [font-family:'Liberation_Mono',monospace]">
        <div className="w-[42px] shrink-0 bg-[#efefef] pl-[8px] text-[#a5a5a5]">
          {HEX.map(([o]) => <div key={o} className="h-[14px]">{o}</div>)}
        </div>
        <div className="pl-[8px]">
          {HEX.map(([o, h]) => <HexLine key={o} off={o} hex={h} />)}
        </div>
      </div>
      <Scroll thumb="h-[140px] rounded-[2px] bg-[#e6e6e6]" />
    </div>
  );
}

function Wireshark() {
  return (
    <div className={`flex h-[1400px] flex-col bg-[#2e323d] ${dj}`}>
      <div className="flex h-[28px] shrink-0 items-center pl-[6px]">
        <svg width="16" height="18" viewBox="0 0 16 18"><path d="M1 17C2 9 8 3 15 1c-2 5-2 11 0 16z" fill="#3fa535" /><circle cx="9" cy="11" r="2" fill="#d8f0d0" /></svg>
        <div className="flex-1 pl-[34px] text-center text-[14px] font-bold leading-none tracking-[0.35px] text-[#6f737c]">Przechwytywanie z Loopback: lo</div>
        <div className="flex w-[60px] items-center justify-between pr-[10px] text-[#555962]">
          <Minus size={10} strokeWidth={3} />
          <Maximize2 size={10} strokeWidth={2.5} />
          <X size={12} strokeWidth={3} />
        </div>
      </div>
      <div className="ml-[2px] mr-[6px] flex min-h-0 flex-1 flex-col bg-[#efefef]">
        <div className="flex h-[19px] shrink-0 items-center gap-[14.8px] bg-[#f3f3f3] pl-[10px] text-[12px] text-[#222]">
          {MENU.map((m) => (
            <span key={m[1] + m[2]}>{m[0]}<span className="underline underline-offset-2">{m[1]}</span>{m[2]}</span>
          ))}
        </div>
        <div className="flex h-[39px] shrink-0 items-center border-b border-[#b9b9b9] bg-[linear-gradient(#f8f8f8,#ececec)] pl-[4px]">
          {TOOLS.map((t, i) => (
            <div key={i} className="flex items-center">
              <span className={`flex h-[31px] items-center justify-center rounded-[3px] ${t.w} ${t.on ? "border border-[#bdbdbd] bg-[#dcdcdc]" : ""}`}>{t.el}</span>
              {t.sep && <span className="mx-[3px] h-[26px] w-px bg-[#dcdcdc]" />}
            </div>
          ))}
        </div>
        <div className="flex h-[31px] shrink-0 items-center pb-[1px] pl-[4px] pr-[8px]">
          <div className="flex h-[20px] flex-1 items-center rounded-[3px] border border-[#8a8a8a] bg-[#afffaf] text-[12px] text-[#111]">
            <span className="flex h-full w-[16px] items-center justify-center rounded-l-[3px] border-r border-[#888] bg-white"><Bookmark size={12} fill="#6a9ad8" className="text-[#6a9ad8]" /></span>
            <span className="ml-[3px] flex-1">tcp.port == 5000</span>
            <span className="flex h-[13px] w-[13px] items-center justify-center rounded-[2px] bg-[#666] text-white"><X size={10} strokeWidth={3} /></span>
            <span className="ml-[3px] flex h-[13px] w-[22px] items-center justify-center rounded-[2px] bg-[#999] text-white"><GoArrow size={11} strokeWidth={3} /></span>
            <span className="ml-[6px] mr-[3px] flex h-[15px] w-[14px] items-center justify-center rounded-[2px] border border-[#999] bg-white"><ChevronDown size={10} /></span>
          </div>
          <Plus size={13} strokeWidth={3} className="ml-[5px] text-[#333]" />
        </div>
        <PacketList />
        <div className="h-[6px] shrink-0" />
        <Details />
        <div className="h-[4px] shrink-0" />
        <HexPane />
        <div className="flex h-[23px] shrink-0 items-center text-[12px] text-[#222]">
          <span className="ml-[10px] h-[15px] w-[15px] rounded-full border border-[#777] bg-[#dcdc3c]" />
          <svg className="ml-[8px]" width="14" height="14" viewBox="0 0 14 14"><rect x="1" y="2" width="10" height="11" fill="#fff" stroke="#888" /><path d="M5 9l7-7 1.5 1.5-7 7-2 .5z" fill="#3a6ab0" /></svg>
          <span className="ml-[17px]">Text item (text), 25 byte(s)</span>
          <span className="ml-[1458px] h-[18px] border-l border-dotted border-[#aaa]" />
          <span className="ml-[12px]">Pakietów: 4957 · Wyświetlanych: 195 (3.9%)</span>
          <span className="ml-auto h-[18px] border-l border-dotted border-[#aaa]" />
          <span className="ml-[12px] mr-[28px] tracking-[0.4px]">Profil: Default</span>
        </div>
      </div>
      <div className="h-[6px] shrink-0" />
    </div>
  );
}

function Rider() {
  const item = "flex flex-col items-center gap-[6px] text-[#a9adb2]";
  const vt = "[writing-mode:vertical-rl] whitespace-nowrap text-[11px]";
  return (
    <div className={`flex h-[2086px] w-[21px] shrink-0 flex-col bg-[#3c3f41] ${dj}`}>
      <div className="flex h-[30px] shrink-0 items-center justify-center bg-[#2e323d] text-[#3d4048]"><X size={12} /></div>
      <div className="flex h-[48px] shrink-0 items-end justify-center border-b border-[#333] pb-[8px] text-[#a9adb2]"><Search size={15} /></div>
      <div className={`${item} mt-[9px]`}>
        <Cpu size={12} />
        <span className={vt}>IL Viewer</span>
      </div>
      <div className={`${item} mt-[25px]`}>
        <Database size={12} />
        <span className={vt}>Database</span>
      </div>
      <div className={`${item} mt-[12px] h-[159px] bg-[#4e5459] pt-[14px]`}>
        <Shield size={12} />
        <span className={vt}>Unit Tests Coverage</span>
      </div>
      <div className="mt-auto pb-[5px] pl-[5px] text-[12px] italic text-[#7a7a7a]">y</div>
    </div>
  );
}

export default function App() {
  return (
    <div className="flex h-[2086px] w-[2343px] overflow-hidden bg-[#2e323d]">
      <div className="w-[2322px] shrink-0">
        <Firefox />
        <Wireshark />
      </div>
      <Rider />
    </div>
  );
}
